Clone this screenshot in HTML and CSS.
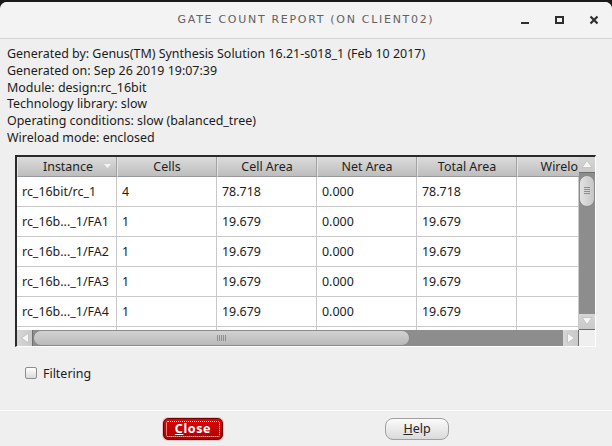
FILE: index.html
```html
<!DOCTYPE html>
<html>
<head>
<meta charset="utf-8">
<link rel="stylesheet" href="styles.css">
</head>
<body>
<div class="window">
  <div class="titlebar">
    <div class="title">Gate Count Report (on client02)</div>
    <div class="wm-buttons">
      <span class="wm-min"></span>
      <span class="wm-max"></span>
      <svg class="wm-close" width="10" height="10" viewBox="0 0 10 10"><path d="M1.5 1.5 L8.5 8.5 M8.5 1.5 L1.5 8.5" stroke="#2e2e2e" stroke-width="2.2" fill="none"/></svg>
    </div>
  </div>
  <div class="content">
    <div class="info">
      <div>Generated by: Genus(TM) Synthesis Solution 16.21-s018_1 (Feb 10 2017)</div>
      <div>Generated on: Sep 26 2019 19:07:39</div>
      <div>Module: design:rc_16bit</div>
      <div>Technology library: slow</div>
      <div>Operating conditions: slow (balanced_tree)</div>
      <div>Wireload mode: enclosed</div>
    </div>
    <div class="frame">
      <div class="viewport">
        <div class="grid">
          <div class="th th-sort"><span>Instance</span><svg class="sort" width="7" height="5" viewBox="0 0 7 5"><path d="M0 0 L7 0 L3.5 4 Z" fill="#f4f4f4"/></svg></div>
          <div class="th">Cells</div>
          <div class="th">Cell Area</div>
          <div class="th">Net Area</div>
          <div class="th">Total Area</div>
          <div class="th th-last">Wirelo</div>

          <div class="td">rc_16bit/rc_1</div><div class="td">4</div><div class="td">78.718</div><div class="td">0.000</div><div class="td">78.718</div><div class="td td-last"></div>
          <div class="td">rc_16b..._1/FA1</div><div class="td">1</div><div class="td">19.679</div><div class="td">0.000</div><div class="td">19.679</div><div class="td td-last"></div>
          <div class="td">rc_16b..._1/FA2</div><div class="td">1</div><div class="td">19.679</div><div class="td">0.000</div><div class="td">19.679</div><div class="td td-last"></div>
          <div class="td">rc_16b..._1/FA3</div><div class="td">1</div><div class="td">19.679</div><div class="td">0.000</div><div class="td">19.679</div><div class="td td-last"></div>
          <div class="td">rc_16b..._1/FA4</div><div class="td">1</div><div class="td">19.679</div><div class="td">0.000</div><div class="td">19.679</div><div class="td td-last"></div>
          <div class="td"></div><div class="td"></div><div class="td"></div><div class="td"></div><div class="td"></div><div class="td td-last"></div>
        </div>
      </div>
      <div class="vscroll">
        <div class="sbtn"><svg width="12" height="10" viewBox="0 0 12 10"><path d="M1 8.5 L6 1.5 L11 8.5 Z" fill="#f6f6f6" stroke="#c4c4c4" stroke-width="1"/></svg></div>
        <div class="vtrough">
          <div class="vthumb"><span class="grip-h"></span><span class="grip-h"></span><span class="grip-h"></span><span class="grip-h"></span></div>
        </div>
        <div class="sbtn sbtn-end"><svg width="12" height="10" viewBox="0 0 12 10"><path d="M1 1.5 L6 8.5 L11 1.5 Z" fill="#f6f6f6" stroke="#c4c4c4" stroke-width="1"/></svg></div>
      </div>
      <div class="hscroll">
        <div class="sbtn"><svg width="10" height="12" viewBox="0 0 10 12"><path d="M8.5 1 L1.5 6 L8.5 11 Z" fill="#f6f6f6" stroke="#c4c4c4" stroke-width="1"/></svg></div>
        <div class="htrough">
          <div class="hthumb"><span class="grip-v"></span><span class="grip-v"></span><span class="grip-v"></span><span class="grip-v"></span><span class="grip-v"></span></div>
        </div>
        <div class="sbtn sbtn-end"><svg width="10" height="12" viewBox="0 0 10 12"><path d="M1.5 1 L8.5 6 L1.5 11 Z" fill="#f6f6f6" stroke="#c4c4c4" stroke-width="1"/></svg></div>
      </div>
      <div class="corner"></div>
    </div>
    <label class="filter"><span class="checkbox"></span><span>Filtering</span></label>
  </div>
  <div class="footer">
    <button class="btn btn-close"><span class="focus"><u>C</u>lose</span></button>
    <button class="btn btn-help"><u>H</u>elp</button>
  </div>
</div>
</body>
</html>
```
FILE: styles.css
```css
* { box-sizing: border-box; }
html, body {
  margin: 0;
  padding: 0;
  width: 612px;
  height: 446px;
  overflow: hidden;
}
body {
  background: #1c1a18;
  font-family: "Noto Sans", "Open Sans", sans-serif;
  font-size: 12.45px;
  color: #1b1b1b;
}
.window {
  margin-top: 2px;
  height: 444px;
  background: #efefef;
  border-radius: 7px 7px 0 0;
  overflow: hidden;
  display: flex;
  flex-direction: column;
}
.titlebar {
  height: 37px;
  background: #f3f3f3;
  border-bottom: 1px solid #d4d4d4;
  position: relative;
  display: flex;
  align-items: center;
  justify-content: center;
}
.title {
  font-family: "DejaVu Sans", sans-serif;
  font-size: 11px;
  text-transform: uppercase;
  letter-spacing: 1.7px;
  color: #626262;
  margin-top: -1px;
}
.wm-buttons {
  position: absolute;
  right: 0;
  top: 0;
  height: 36px;
  display: flex;
  align-items: center;
}
.wm-min {
  width: 8px;
  height: 2px;
  background: #2e2e2e;
  margin: 6px 26px 0 0;
}
.wm-max {
  width: 9px;
  height: 8px;
  border: 2px solid #2e2e2e;
  margin: 0 25px 0 0;
}
.wm-close {
  margin-right: 13px;
}
.content {
  flex: 1;
}
.info {
  padding: 7px 0 0 7px;
  line-height: 16.8px;
  white-space: nowrap;
}
.frame {
  margin: 8px 0 0 15px;
  width: 581px;
  height: 192px;
  border-top: 2px solid #2a2a2a;
  border-left: 2px solid #2a2a2a;
  border-right: 1px solid #ffffff;
  border-bottom: 1px solid #ffffff;
  display: grid;
  grid-template-columns: 562px 16px;
  grid-template-rows: 173px 16px;
  background: #ffffff;
}
.viewport {
  overflow: hidden;
  background: #ffffff;
}
.grid {
  display: grid;
  grid-template-columns: repeat(5, 100px) 62px;
  grid-template-rows: 20px repeat(6, 30px);
  width: 562px;
}
.th {
  background: linear-gradient(#dcdcdc, #bdbdbd);
  border-right: 1px solid #a2a2a2;
  border-left: 1px solid #e4e4e4;
  border-bottom: 1px solid #9a9a9a;
  text-align: center;
  line-height: 19px;
  white-space: nowrap;
  color: #1e1e1e;
}
.th-last {
  text-align: right;
  padding-right: 1px;
  border-right: none;
}
.td-last {
  border-right: none;
}
.th-sort {
  display: flex;
  align-items: center;
  padding-left: 20px;
}
.th-sort span {
  flex: 1;
  text-align: center;
}
.sort {
  margin: 0 5px 0 6px;
}
.td {
  background: #ffffff;
  border-right: 1px solid #c9c9c9;
  border-bottom: 1px solid #c9c9c9;
  padding-left: 5px;
  line-height: 29px;
  white-space: nowrap;
  color: #1b1b1b;
}
.vscroll {
  display: flex;
  flex-direction: column;
  background: #8d8d8d;
}
.sbtn {
  width: 16px;
  height: 16px;
  flex: none;
  background: linear-gradient(#d6d6d6, #c9c9c9);
  border-bottom: 1px solid #6e6e6e;
  display: flex;
  align-items: center;
  justify-content: center;
}
.hscroll .sbtn {
  border-bottom: none;
  border-right: 1px solid #6e6e6e;
  background: linear-gradient(90deg, #d6d6d6, #c9c9c9);
}
.vtrough {
  flex: 1;
  padding-top: 2px;
}
.vthumb {
  width: 16px;
  height: 32px;
  border: 1px solid #8a8a8a;
  border-radius: 8px;
  background: linear-gradient(90deg, #e2e2e2, #c6c6c6);
  display: flex;
  flex-direction: column;
  align-items: center;
  justify-content: center;
  gap: 1px;
}
.grip-h {
  width: 6px;
  height: 1px;
  background: #8e8e8e;
}
.hscroll {
  display: flex;
  background: #8d8d8d;
}
.htrough {
  flex: 1;
  display: flex;
}
.hthumb {
  width: 377px;
  height: 16px;
  border: 1px solid #8a8a8a;
  border-radius: 8px;
  background: linear-gradient(#d2d2d2, #b9b9b9);
  display: flex;
  align-items: center;
  justify-content: center;
  gap: 1px;
}
.grip-v {
  width: 1px;
  height: 6px;
  background: #8e8e8e;
}
.corner {
  background: #efefef;
}
.filter {
  display: flex;
  align-items: center;
  margin: 20px 0 0 25px;
  gap: 6px;
  height: 13px;
}
.checkbox {
  width: 12px;
  height: 12px;
  border: 1px solid #8c8c8c;
  border-radius: 2px;
  background: linear-gradient(#ffffff, #dadada);
}
.footer {
  height: 36px;
  border-top: 1px solid #ffffff;
  display: flex;
  justify-content: center;
  align-items: flex-start;
  gap: 162px;
  padding-top: 7px;
  flex: none;
}
.btn {
  height: 22px;
  padding: 0;
  margin: 0;
  font-family: "Noto Sans", sans-serif;
  font-size: 12.5px;
  cursor: default;
}
.btn-close {
  width: 60px;
  border: 1px solid #6e0000;
  border-radius: 5px;
  background: linear-gradient(#d80808, #b00000);
  box-shadow: 0 0 0 1px #e0c8c8;
  color: #ffffff;
  font-weight: bold;
  padding: 2px;
  display: flex;
}
.focus {
  flex: 1;
  border: 1px dotted #ffffff;
  border-radius: 2px;
  line-height: 14px;
  letter-spacing: 0.6px;
}
.btn-help {
  width: 64px;
  border: 1px solid #a0a0a0;
  border-radius: 8px;
  background: linear-gradient(#fbfbfb, #dadada);
  color: #222222;
  line-height: 20px;
}
```
